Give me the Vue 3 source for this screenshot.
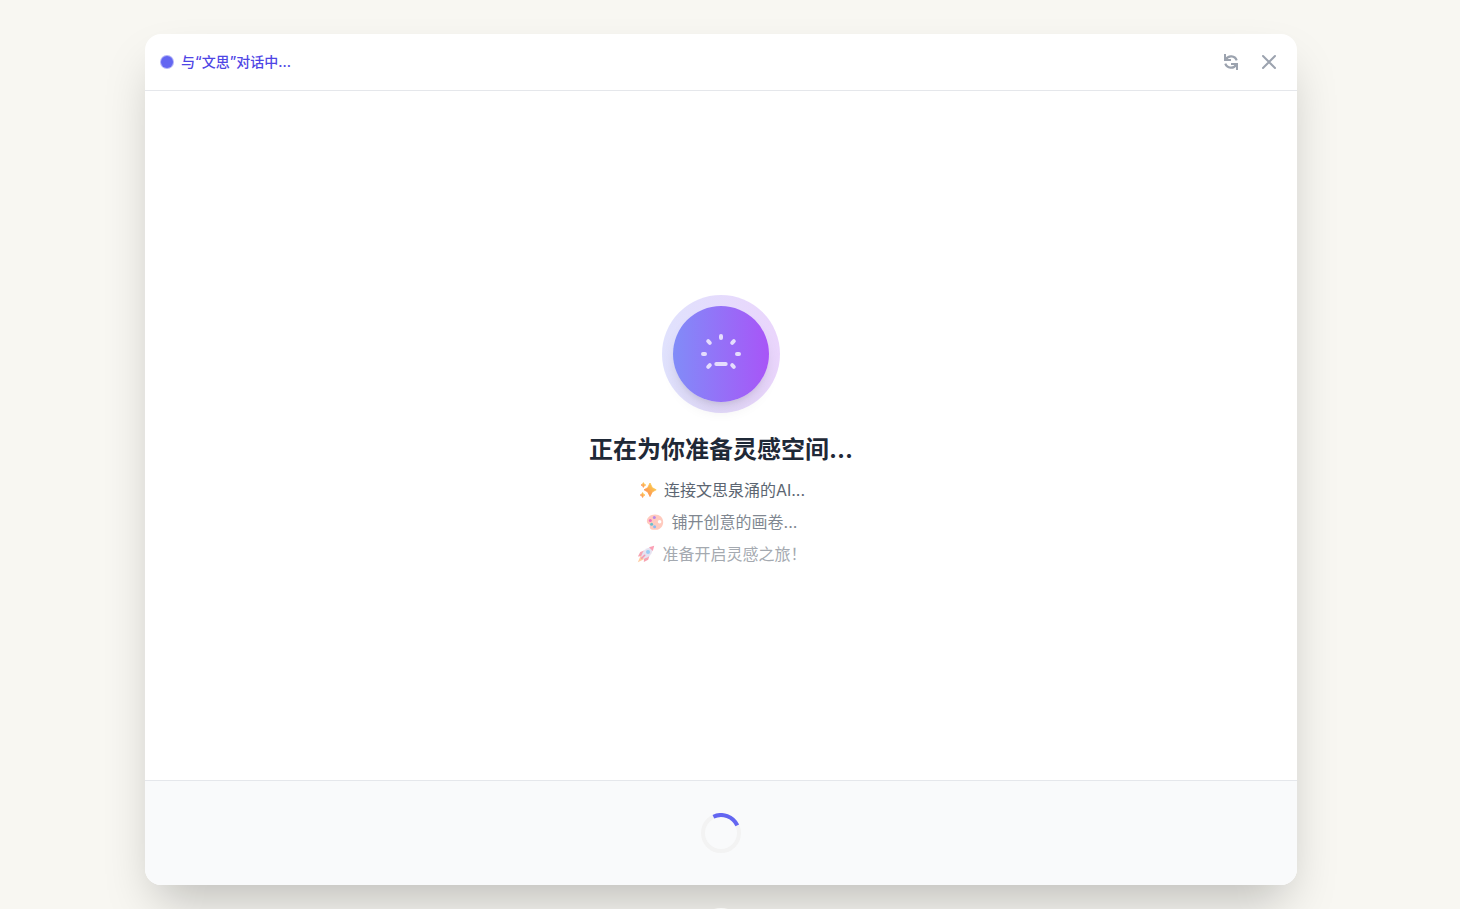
<script setup>
import { ref } from 'vue'

const steps = ref([
  { icon: 'sparkles', text: '连接文思泉涌的AI...', tone: 'first' },
  { icon: 'palette', text: '铺开创意的画卷...', tone: 'second' },
  { icon: 'rocket', text: '准备开启灵感之旅！', tone: 'third' },
])
</script>

<template>
  <div class="page">
    <section class="dialog">
      <header class="bar">
        <div class="status">
          <span class="dot"></span>
          <span>与“文思”对话中...</span>
        </div>
        <div class="actions">
          <button type="button" class="icon-button" aria-label="刷新">
            <svg width="20" height="20" viewBox="0 0 20 20" fill="none" stroke="currentColor" stroke-width="2">
              <g v-for="turn in [0, 180]" :key="turn" :transform="`rotate(${turn} 10 10)`">
                <path d="M4 2v6h6" />
                <path d="M4.800 7.400A6 6 0 0 1 15.700 8.300" stroke-width="2.200" />
                <path d="M4 4.500L7.500 8H4z" fill="currentColor" stroke="none" />
              </g>
            </svg>
          </button>
          <button type="button" class="icon-button" aria-label="关闭">
            <svg width="24" height="24" viewBox="0 0 24 24" fill="none" stroke="currentColor" stroke-width="2" stroke-linecap="round" stroke-linejoin="round">
              <path d="M6 18L18 6M6 6l12 12" />
            </svg>
          </button>
        </div>
      </header>
      <main class="content">
        <div class="orb-halo">
          <div class="orb">
            <svg width="48" height="48" viewBox="0 0 48 48" fill="none" stroke="currentColor" stroke-width="4" stroke-linecap="round">
              <path d="M24 6v2M36.800 11.200l-1.600 1.600M11.200 11.200l1.600 1.600M6 24h2M40 24h2M11.200 36.800l1.600-1.600M36.800 36.800l-1.600-1.600M19.300 34h9.400" />
            </svg>
          </div>
        </div>
        <h1 class="title">正在为你准备灵感空间...</h1>
        <ul class="steps">
          <li v-for="step in steps" :key="step.text" :class="['step', step.tone]">
            <svg v-if="step.icon === 'sparkles'" class="emoji" width="20" height="20" viewBox="-2 -1 20 20">
              <defs>
                <linearGradient id="spark" x1="1" y1="0" x2="0" y2="1">
                  <stop offset="0.200" stop-color="#fbc63c" />
                  <stop offset="1" stop-color="#ff7043" />
                </linearGradient>
              </defs>
              <g fill="url(#spark)" stroke="url(#spark)" stroke-width="0.800" stroke-linejoin="round">
                <path d="M11 2L13.300 6.700 17.200 8.800 13.300 10.900 11 15.600 8.700 10.900 5 8.800 8.700 6.700z" />
                <path d="M4.400 1.600L5.200 3.200 6.800 4 5.200 4.800 4.400 6.400 3.600 4.800 2 4 3.600 3.200z" />
                <path d="M3.600 11.500L4.400 13.200 6 14 4.400 14.800 3.600 16.500 2.800 14.800 1.200 14 2.800 13.200z" />
              </g>
            </svg>
            <svg v-else-if="step.icon === 'palette'" class="emoji" width="20" height="20" viewBox="-1 -1 20 20">
              <path fill="#ffb5a3" fill-rule="evenodd" d="M9 1.500c4.800 0 8.200 3 8.200 7.500S14 16.800 10 16.800H6.800C4.800 16.800 3.400 15.300 3.800 13.500c.3-1.300-.4-1.900-1.300-2.400C1.300 10.400.9 9.500.9 8.300.9 4.300 4.500 1.500 9 1.500zM13.600 7a1.800 1.800 0 100 3.600 1.800 1.800 0 000-3.600z" />
              <circle cx="4.300" cy="7.500" r="1.500" fill="#f0359e" />
              <circle cx="8.300" cy="4.600" r="1.500" fill="#9a53e0" />
              <circle cx="5.600" cy="11.200" r="1.500" fill="#2ba5b8" />
              <circle cx="8.600" cy="13.800" r="1.500" fill="#5a9ff0" />
            </svg>
            <svg v-else class="emoji" width="20" height="20" viewBox="-2 -1 20 20">
              <path fill="#ff9b45" d="M3.800 10.600L.8 17.200l6.600-3.200z" />
              <path fill="#f04a67" d="M7.200 5.600L3.300 7 .9 11.400l4.600-.4zM12.400 10.800l-1.200 3.900-4.400 2.400.4-4.600z" />
              <path fill="#cfc6e2" d="M16 2c-4.600.2-8.400 2-10.200 5.200L4.200 11l2.800 2.800 3.800-1.600C14 10.400 15.800 6.600 16 2z" />
              <path fill="#f8416b" d="M17.200.8L12 2.200l3.800 3.800z" />
              <circle cx="11" cy="7" r="2" fill="#3b9de8" />
              <path stroke="#e93868" stroke-width="1.600" stroke-linecap="round" d="M4.700 13.300l3-3" />
            </svg>
            <span>{{ step.text }}</span>
          </li>
        </ul>
      </main>
      <footer class="footer">
        <svg class="spinner" width="40" height="40" viewBox="0 0 40 40" fill="none" stroke-width="4">
          <circle cx="20" cy="20" r="18" stroke="#f3f3f3" />
          <path d="M12.400 3.700A18 18 0 0 1 36.300 12.400" stroke="#6366f1" />
        </svg>
      </footer>
    </section>
    <span class="knob"></span>
  </div>
</template>

<style>
body {
  background: #f8f7f2;
}
</style>

<style scoped>
* {
  box-sizing: border-box;
}
.page {
  display: flex;
  flex-direction: column;
  height: 100vh;
  padding: 34px 163px 0 145px;
  overflow: hidden;
  font-family: Inter, "Noto Sans CJK SC", sans-serif;
}
.dialog {
  display: flex;
  flex: none;
  flex-direction: column;
  height: calc(100vh - 58px);
  overflow: hidden;
  border-radius: 16px;
  background: #fff;
  box-shadow: 0 25px 50px -12px rgba(0, 0, 0, 0.25);
}
.bar {
  display: flex;
  align-items: center;
  justify-content: space-between;
  padding: 12px 12px 12px 16px;
  border-bottom: 1px solid #e5e7eb;
}
.status {
  display: flex;
  align-items: center;
  gap: 8px;
  font-size: 14px;
  font-weight: 500;
  line-height: 20px;
  color: #4f46e5;
}
.dot {
  width: 12px;
  height: 12px;
  border-radius: 50%;
  background: #6366f1;
  box-shadow: 0 0 0 1px rgba(99, 102, 241, 0.5);
}
.actions {
  display: flex;
  gap: 6px;
}
.icon-button {
  display: grid;
  place-items: center;
  width: 32px;
  height: 32px;
  padding: 0;
  border: 0;
  background: transparent;
  color: #9ca3af;
}
.content {
  display: flex;
  flex: 1;
  flex-direction: column;
  align-items: center;
  justify-content: center;
  padding-bottom: 11px;
  text-align: center;
}
.orb-halo {
  display: grid;
  place-items: center;
  width: 118px;
  height: 118px;
  margin-bottom: 21px;
  border-radius: 50%;
  background: linear-gradient(to right, #e0e2fd, #ead5fc);
}
.orb {
  display: grid;
  place-items: center;
  width: 96px;
  height: 96px;
  border-radius: 50%;
  background: linear-gradient(to right, #818cf8, #a855f7);
  box-shadow: 0 10px 15px -3px rgba(0, 0, 0, 0.1), 0 4px 6px -4px rgba(0, 0, 0, 0.1);
  color: #e5ddfd;
}
.title {
  margin: 0 0 12px;
  font-size: 24px;
  font-weight: 700;
  line-height: 32px;
  color: #1f2937;
}
.steps {
  display: grid;
  gap: 8px;
  margin: 0;
  padding: 0;
  list-style: none;
  font-size: 16px;
  line-height: 24px;
  color: #4b5563;
}
.step {
  display: flex;
  align-items: center;
  justify-content: center;
  gap: 7px;
}
.first {
  opacity: 0.9;
}
.second {
  opacity: 0.7;
}
.third {
  opacity: 0.5;
}
.footer {
  display: grid;
  place-items: center;
  padding: 32px;
  border-top: 1px solid #e5e7eb;
  background: #f9fafb;
}
.spinner {
  display: block;
}
.knob {
  flex: none;
  align-self: center;
  width: 48px;
  height: 48px;
  margin-top: 23px;
  border-radius: 50%;
  background: #f8f8f6;
}
</style>
